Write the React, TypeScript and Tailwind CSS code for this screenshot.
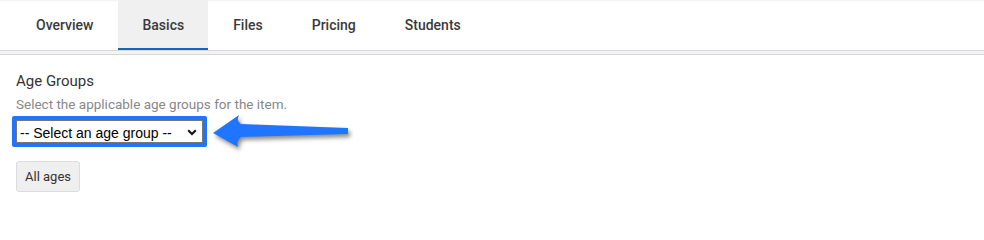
import { useState } from "react"

const tabs = ["Overview", "Basics", "Files", "Pricing", "Students"]

function BlueArrow() {
  return (
    <svg width="142" height="42" viewBox="0 0 142 42" className="-my-[6px] ml-[3px] drop-shadow-[2px_3px_2px_rgba(0,0,0,0.45)]">
      <path d="M3 22 L29 4 Q26 10 31 13 L138 17 L138 23 L31 26 Q26 30 28 36 Z" fill="#1f75fe" />
    </svg>
  )
}

export default function App() {
  const [active, setActive] = useState("Basics")

  return (
    <div className="min-h-screen bg-white font-['Roboto',sans-serif]">
      {/* Tab bar */}
      <div className="flex h-[50px] bg-white pl-[12px] shadow-[inset_0_2px_2px_-1px_rgba(0,0,0,0.06)]">
        {tabs.map((tab) => (
          <button
            key={tab}
            onClick={() => setActive(tab)}
            className={`mr-[1px] flex h-full items-center px-6 text-sm font-medium text-[#3a3a3a] ${
              active === tab ? "border-b-2 border-[#1565c0] bg-[#f0f0f0] pt-[2px]" : ""
            }`}
          >
            {tab}
          </button>
        ))}
      </div>
      <div className="h-[5px] border-y border-[#d8d8d8] bg-[#f3f3f6]" />

      {/* Age groups */}
      <div className="px-4 pt-[16px]">
        <div className="text-[15px] leading-5 text-[#333]">Age Groups</div>
        <div className="mt-[3px] text-[13.5px] leading-5 text-[#888]">Select the applicable age groups for the item.</div>

        <div className="mt-[2px] flex items-center">
          <div className="-ml-1 rounded-[2px] border-4 border-[#1f75fe]">
            <div className="relative h-[23px] w-[187px] border border-[#767676] bg-white">
              <select className="h-full w-full appearance-none bg-transparent pl-[3px] font-['Liberation_Sans',Arial,sans-serif] text-sm text-black outline-none">
                <option>-- Select an age group --</option>
                <option>All ages</option>
              </select>
              <svg width="10" height="7" viewBox="0 0 10 7" className="pointer-events-none absolute right-[5px] top-[8px]">
                <polyline points="1.2,1.2 5,5 8.8,1.2" fill="none" stroke="#111" strokeWidth="2" />
              </svg>
            </div>
          </div>
          <BlueArrow />
        </div>

        <button className="mt-[14px] h-[31px] rounded-[3px] border border-[#dcdcdc] bg-[#efefef] px-[8px] text-[13px] text-[#333]">
          All ages
        </button>
      </div>
    </div>
  )
}
